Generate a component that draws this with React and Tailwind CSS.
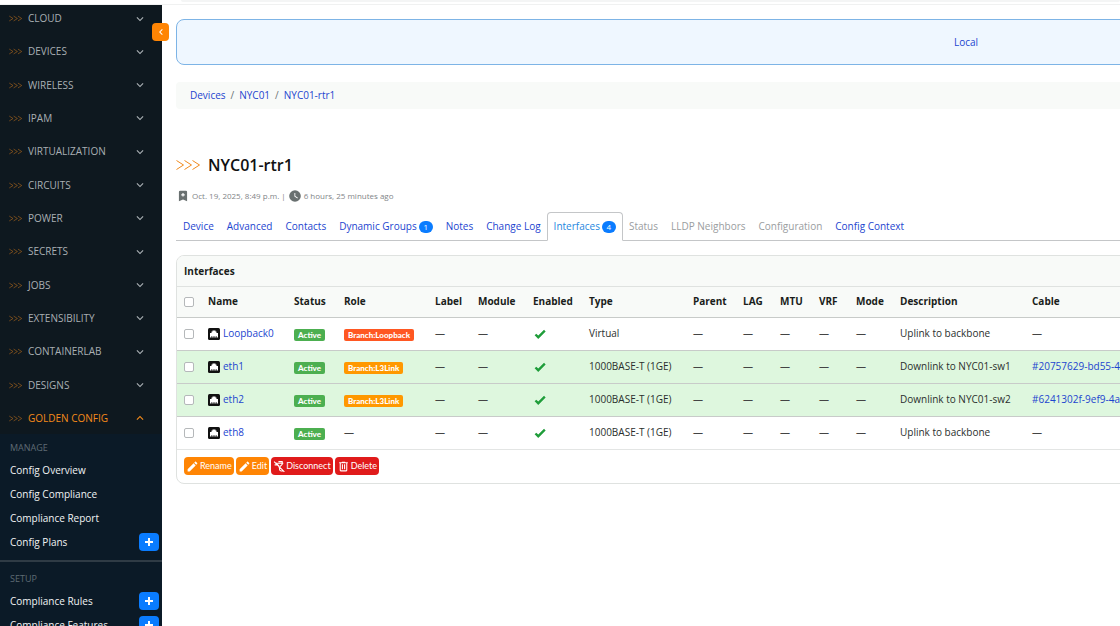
import React, { Fragment } from 'react';

const menuItems = [
  'Cloud', 'Devices', 'Wireless', 'IPAM', 'Virtualization', 'Circuits', 'Power',
  'Secrets', 'Jobs', 'Extensibility', 'Containerlab', 'Designs', 'Golden Config',
];

const submenus = [
  {
    title: 'Manage',
    items: [
      { label: 'Config Overview' },
      { label: 'Config Compliance' },
      { label: 'Compliance Report' },
      { label: 'Config Plans', add: true },
    ],
  },
  {
    title: 'Setup',
    items: [
      { label: 'Compliance Rules', add: true },
      { label: 'Compliance Features', add: true },
    ],
  },
];

const tabs = [
  { label: 'Device' },
  { label: 'Advanced' },
  { label: 'Contacts' },
  { label: 'Dynamic Groups', count: 1 },
  { label: 'Notes' },
  { label: 'Change Log' },
  { label: 'Interfaces', count: 4, active: true },
  { label: 'Status', disabled: true },
  { label: 'LLDP Neighbors', disabled: true },
  { label: 'Configuration', disabled: true },
  { label: 'Config Context' },
];

const interfaces = [
  { name: 'Loopback0', role: 'Branch:Loopback', type: 'Virtual', description: 'Uplink to backbone' },
  { name: 'eth1', role: 'Branch:L3Link', type: '1000BASE-T (1GE)', description: 'Downlink to NYC01-sw1', cable: '#20757629-bd55-4406-9d5f-1f0c3a7be210' },
  { name: 'eth2', role: 'Branch:L3Link', type: '1000BASE-T (1GE)', description: 'Downlink to NYC01-sw2', cable: '#6241302f-9ef9-4a9c-8a41-50d2c6e7f913' },
  { name: 'eth8', type: '1000BASE-T (1GE)', description: 'Uplink to backbone' },
];

const columns = ['Name', 'Status', 'Role', 'Label', 'Module', 'Enabled', 'Type', 'Parent', 'LAG', 'MTU', 'VRF', 'Mode', 'Description', 'Cable'];

const icons = {
  pencil: 'M20.71,7.04C21.1,6.65 21.1,6 20.71,5.63L18.37,3.29C18,2.9 17.35,2.9 16.96,3.29L15.12,5.12L18.87,8.87M3,17.25V21H6.75L17.81,9.93L14.06,6.18L3,17.25Z',
  trash: 'M9,3V4H4V6H5V19A2,2 0 0,0 7,21H17A2,2 0 0,0 19,19V6H20V4H15V3H9M7,6H17V19H7V6M9,8V17H11V8H9M13,8V17H15V8H13Z',
  plus: 'M20 14H14V20H10V14H4V10H10V4H14V10H20V14Z',
  check: 'M9,20.42L2.79,14.21L5.62,11.38L9,14.77L18.88,4.88L21.71,7.71L9,20.42Z',
  clock: 'M12,2A10,10 0 0,0 2,12A10,10 0 0,0 12,22A10,10 0 0,0 22,12A10,10 0 0,0 12,2M16.2,16.2L11,13V7H12.5V12.2L17,14.9L16.2,16.2Z',
  bookmark: 'M17,3H7A2,2 0 0,0 5,5V21L12,18L19,21V5A2,2 0 0,0 17,3M11,7H13V9H15V11H13V13H11V11H9V9H11V7Z',
  chevronDown: 'M7.41,8.58L12,13.17L16.59,8.58L18,10L12,16L6,10L7.41,8.58Z',
  chevronUp: 'M7.41,15.41L12,10.83L16.59,15.41L18,14L12,8L6,14L7.41,15.41Z',
  chevronLeft: 'M15.41,16.58L10.83,12L15.41,7.41L14,6L8,12L14,18L15.41,16.58Z',
};

function Icon({ name, className }) {
  return (
    <svg viewBox="0 0 24 24" fill="currentColor" className={className} aria-hidden="true">
      <path d={icons[name]} />
    </svg>
  );
}

function Arrows({ className }) {
  return (
    <svg viewBox="0 0 24 12" fill="none" stroke="#f08a1c" className={className} aria-hidden="true">
      <path d="M0.5 1.5L7.5 6L0.5 10.5M8.5 1.5L15.5 6L8.5 10.5M16.5 1.5L23.5 6L16.5 10.5" />
    </svg>
  );
}

function EthernetIcon() {
  return (
    <svg viewBox="0 0 24 24" className="w-3 h-3 shrink-0" aria-hidden="true">
      <rect x="0" y="0" width="24" height="24" rx="3" fill="#111" />
      <path d="M4 19V10H7V7H9V5H15V7H17V10H20V19H17V16H15.5V19H12.8V16H11.2V19H8.5V16H7V19Z" fill="#fff" />
    </svg>
  );
}

function UnplugIcon() {
  return (
    <svg viewBox="0 0 24 24" fill="none" stroke="currentColor" strokeWidth="2" className="w-[13px] h-[13px]" aria-hidden="true">
      <path d="M2 3L21 22M3 9H8M5 5L11 11V14M10 3H17V8L13 12M8 6H19M12 13V17C12 20 15 21 19 20" />
    </svg>
  );
}

function Dash() {
  return <span className="text-[#444]">—</span>;
}

function Badge({ className, children }) {
  return (
    <span className={`block w-fit px-1 mt-[2px] rounded-xs text-white text-[8px] leading-3 font-black font-[Lato,sans-serif] ${className}`}>
      {children}
    </span>
  );
}

function AddButton({ label }) {
  return (
    <button aria-label={`Add ${label}`} className="w-5 h-[18px] rounded bg-[#0a7cff] text-white flex items-center justify-center">
      <Icon name="plus" className="w-3 h-3" />
    </button>
  );
}

function Sidebar() {
  return (
    <aside className="relative w-[162px] shrink-0 bg-[#0b1a27]">
      <button aria-label="Collapse menu" className="absolute z-10 top-[18px] left-[152px] w-[17px] h-[18px] rounded bg-[#ff8504] text-white flex items-center justify-center">
        <Icon name="chevronLeft" className="w-3 h-3" />
      </button>
      <nav className="h-full overflow-hidden">
        <ul className="h-[429px] pb-[2px] flex flex-col justify-between bg-[#0e181f]">
          {menuItems.map((item) => {
            const open = item === 'Golden Config';
            return (
              <li key={item}>
                <button className={`w-full h-[27px] pl-[9px] pr-[15px] flex items-center uppercase ${open ? 'text-[#f58a1a] font-medium' : 'text-[#a9afb3]'}`}>
                  <Arrows className="w-[13px] h-[7px] mr-[6px] opacity-80" />
                  {item}
                  <Icon name={open ? 'chevronUp' : 'chevronDown'} className="w-[14px] h-[14px] ml-auto" />
                </button>
              </li>
            );
          })}
        </ul>
        {submenus.map((group, index) => (
          <Fragment key={group.title}>
            {index > 0 && <hr className="mt-[6px] mb-[3px] border-0 h-[2px] bg-[#2f3b45]" />}
            <section className="pt-1 pl-[10px] pr-[3px]">
              <h6 className="h-5 leading-5 text-[9px] uppercase text-[#5f6b74]">{group.title}</h6>
              <ul>
                {group.items.map((item) => (
                  <li key={item.label} className="h-6 flex items-center justify-between">
                    <a href="#" className="text-[#f1f3f4] font-medium whitespace-nowrap">{item.label}</a>
                    {item.add && <AddButton label={item.label} />}
                  </li>
                ))}
              </ul>
            </section>
          </Fragment>
        ))}
      </nav>
    </aside>
  );
}

function Tabs() {
  return (
    <ul className="mt-2 pl-px flex border-b border-[#c4c6c8]">
      {tabs.map((tab) => (
        <li key={tab.label} className="-mb-px -ml-px">
          <a
            href="#"
            className={`h-[29px] px-[6px] flex items-center gap-[2px] border whitespace-nowrap rounded-t ${
              tab.active ? 'border-[#c4c6c8] border-b-white text-[#1f88e0]' : 'border-transparent'
            } ${tab.disabled ? 'text-[#9a9da0]' : ''} ${!tab.active && !tab.disabled ? 'text-[#1d45cf]' : ''}`}
          >
            {tab.label}
            {tab.count && (
              <span className="w-[14px] h-3 rounded-full bg-[#0a7cff] text-white text-[8px] leading-3 text-center">{tab.count}</span>
            )}
          </a>
        </li>
      ))}
    </ul>
  );
}

function InterfaceRow({ row }) {
  return (
    <tr className={`h-[33px] border-b border-[#c8cbc9] last:border-[#e3e5e4] ${row.cable ? 'bg-[#def7de]' : 'bg-white'}`}>
      <td className="px-[7px]">
        <input type="checkbox" aria-label={`Select ${row.name}`} className="block appearance-none w-[10px] h-[10px] border border-[#b5b8ba] rounded-xs bg-white" />
      </td>
      <td className="px-[7px]">
        <a href="#" className="flex items-center gap-[3px] text-[#1d45cf]">
          <EthernetIcon />
          {row.name}
        </a>
      </td>
      <td className="px-[7px]"><Badge className="bg-[#4caf50]">Active</Badge></td>
      <td className="px-[7px]">
        {row.role ? (
          <Badge className={row.name === 'Loopback0' ? 'bg-[#ff5722]' : 'bg-[#ff9800]'}>{row.role}</Badge>
        ) : <Dash />}
      </td>
      <td className="px-[7px]"><Dash /></td>
      <td className="px-[7px]"><Dash /></td>
      <td className="px-[7px]"><Icon name="check" className="w-[14px] h-[14px] text-[#1f9d3a]" /></td>
      <td className="px-[7px]">{row.type}</td>
      <td className="px-[7px]"><Dash /></td>
      <td className="px-[7px]"><Dash /></td>
      <td className="px-[7px]"><Dash /></td>
      <td className="px-[7px]"><Dash /></td>
      <td className="px-[7px]"><Dash /></td>
      <td className="px-[7px]">{row.description}</td>
      <td className="px-[7px]">{row.cable ? <a href="#" className="text-[#1d45cf]">{row.cable}</a> : <Dash />}</td>
    </tr>
  );
}

function InterfacesCard() {
  return (
    <section className="mt-[14px] border border-[#dfe2e0] rounded-lg overflow-hidden text-[#2b2f2d]">
      <h2 className="h-[31px] flex items-center px-[7px] bg-[#f8faf8] border-b border-[#dfe2e0] font-bold text-[#1a1d1b]">Interfaces</h2>
      <table className="w-full table-fixed text-left whitespace-nowrap">
        <colgroup>
          <col className="w-[24px]" />
          <col className="w-[86px]" />
          <col className="w-[50px]" />
          <col className="w-[91px]" />
          <col className="w-[43px]" />
          <col className="w-[55px]" />
          <col className="w-[56px]" />
          <col className="w-[104px]" />
          <col className="w-[50px]" />
          <col className="w-[37px]" />
          <col className="w-[39px]" />
          <col className="w-[37px]" />
          <col className="w-[44px]" />
          <col className="w-[132px]" />
          <col />
        </colgroup>
        <thead>
          <tr className="h-[30px] bg-[#f8faf8] border-b border-[#c8cbc9] text-[#1a1d1b]">
            <th className="px-[7px]">
              <input type="checkbox" aria-label="Select all" className="block appearance-none w-[10px] h-[10px] border border-[#b5b8ba] rounded-xs bg-white" />
            </th>
            {columns.map((column) => (
              <th key={column} className="px-[7px] font-bold">{column}</th>
            ))}
          </tr>
        </thead>
        <tbody>
          {interfaces.map((row) => (
            <InterfaceRow key={row.name} row={row} />
          ))}
        </tbody>
      </table>
      <div className="h-[33px] px-[7px] flex items-center gap-[2px] text-white text-[9px] font-[Lato,sans-serif]">
        <button className="h-[18px] px-[2px] flex items-center gap-px rounded bg-[#ff8504]">
          <Icon name="pencil" className="w-[13px] h-[13px]" />Rename
        </button>
        <button className="h-[18px] px-[2px] flex items-center gap-px rounded bg-[#ff8504]">
          <Icon name="pencil" className="w-[13px] h-[13px]" />Edit
        </button>
        <button className="h-[18px] px-[2px] flex items-center rounded bg-[#e01b1b]">
          <UnplugIcon />Disconnect
        </button>
        <button className="h-[18px] px-[2px] flex items-center gap-px rounded bg-[#e01b1b]">
          <Icon name="trash" className="w-[13px] h-[13px]" />Delete
        </button>
      </div>
    </section>
  );
}

export default function App() {
  return (
    <div className="h-screen flex flex-col overflow-hidden bg-white text-[10px] font-['Open_Sans',sans-serif]">
      <header className="h-[5px] shrink-0 pl-[181px] border-b border-[#f0f1f1]">
        <div className="h-[2px] rounded-b bg-[#f4f5f5]"></div>
      </header>
      <div className="flex-1 min-h-0 flex">
        <Sidebar />
        <main className="flex-1 min-w-0 overflow-hidden">
          <div className="min-w-[1594px] pt-[14px] pl-[14px]">
            <div className="h-[46px] flex items-center justify-center border border-[#7db4e6] rounded-lg bg-[#eff7ff]">
              <a href="#" className="text-[#1d45cf]">Local</a>
            </div>
            <nav aria-label="Breadcrumb" className="mt-[17px] h-[27px] px-[14px] flex items-center gap-[5px] rounded bg-[#f8faf8] text-[#1d45cf]">
              <a href="#">Devices</a>
              <span className="text-[#6b7075]">/</span>
              <a href="#">NYC01</a>
              <span className="text-[#6b7075]">/</span>
              <a href="#">NYC01-rtr1</a>
            </nav>
            <h1 className="mt-[44px] h-6 flex items-center gap-2 text-[16px] font-semibold text-[#111]">
              <Arrows className="w-6 h-3" />
              NYC01-rtr1
            </h1>
            <p className="mt-[11px] h-4 flex items-center gap-[2px] text-[8px] text-[#7f8588]">
              <Icon name="bookmark" className="w-[14px] h-[14px] text-[#697070]" />
              Oct. 19, 2025, 8:49 p.m. |
              <Icon name="clock" className="w-[14px] h-[14px] text-[#697070]" />
              6 hours, 25 minutes ago
            </p>
            <Tabs />
            <InterfacesCard />
          </div>
        </main>
      </div>
    </div>
  );
}
